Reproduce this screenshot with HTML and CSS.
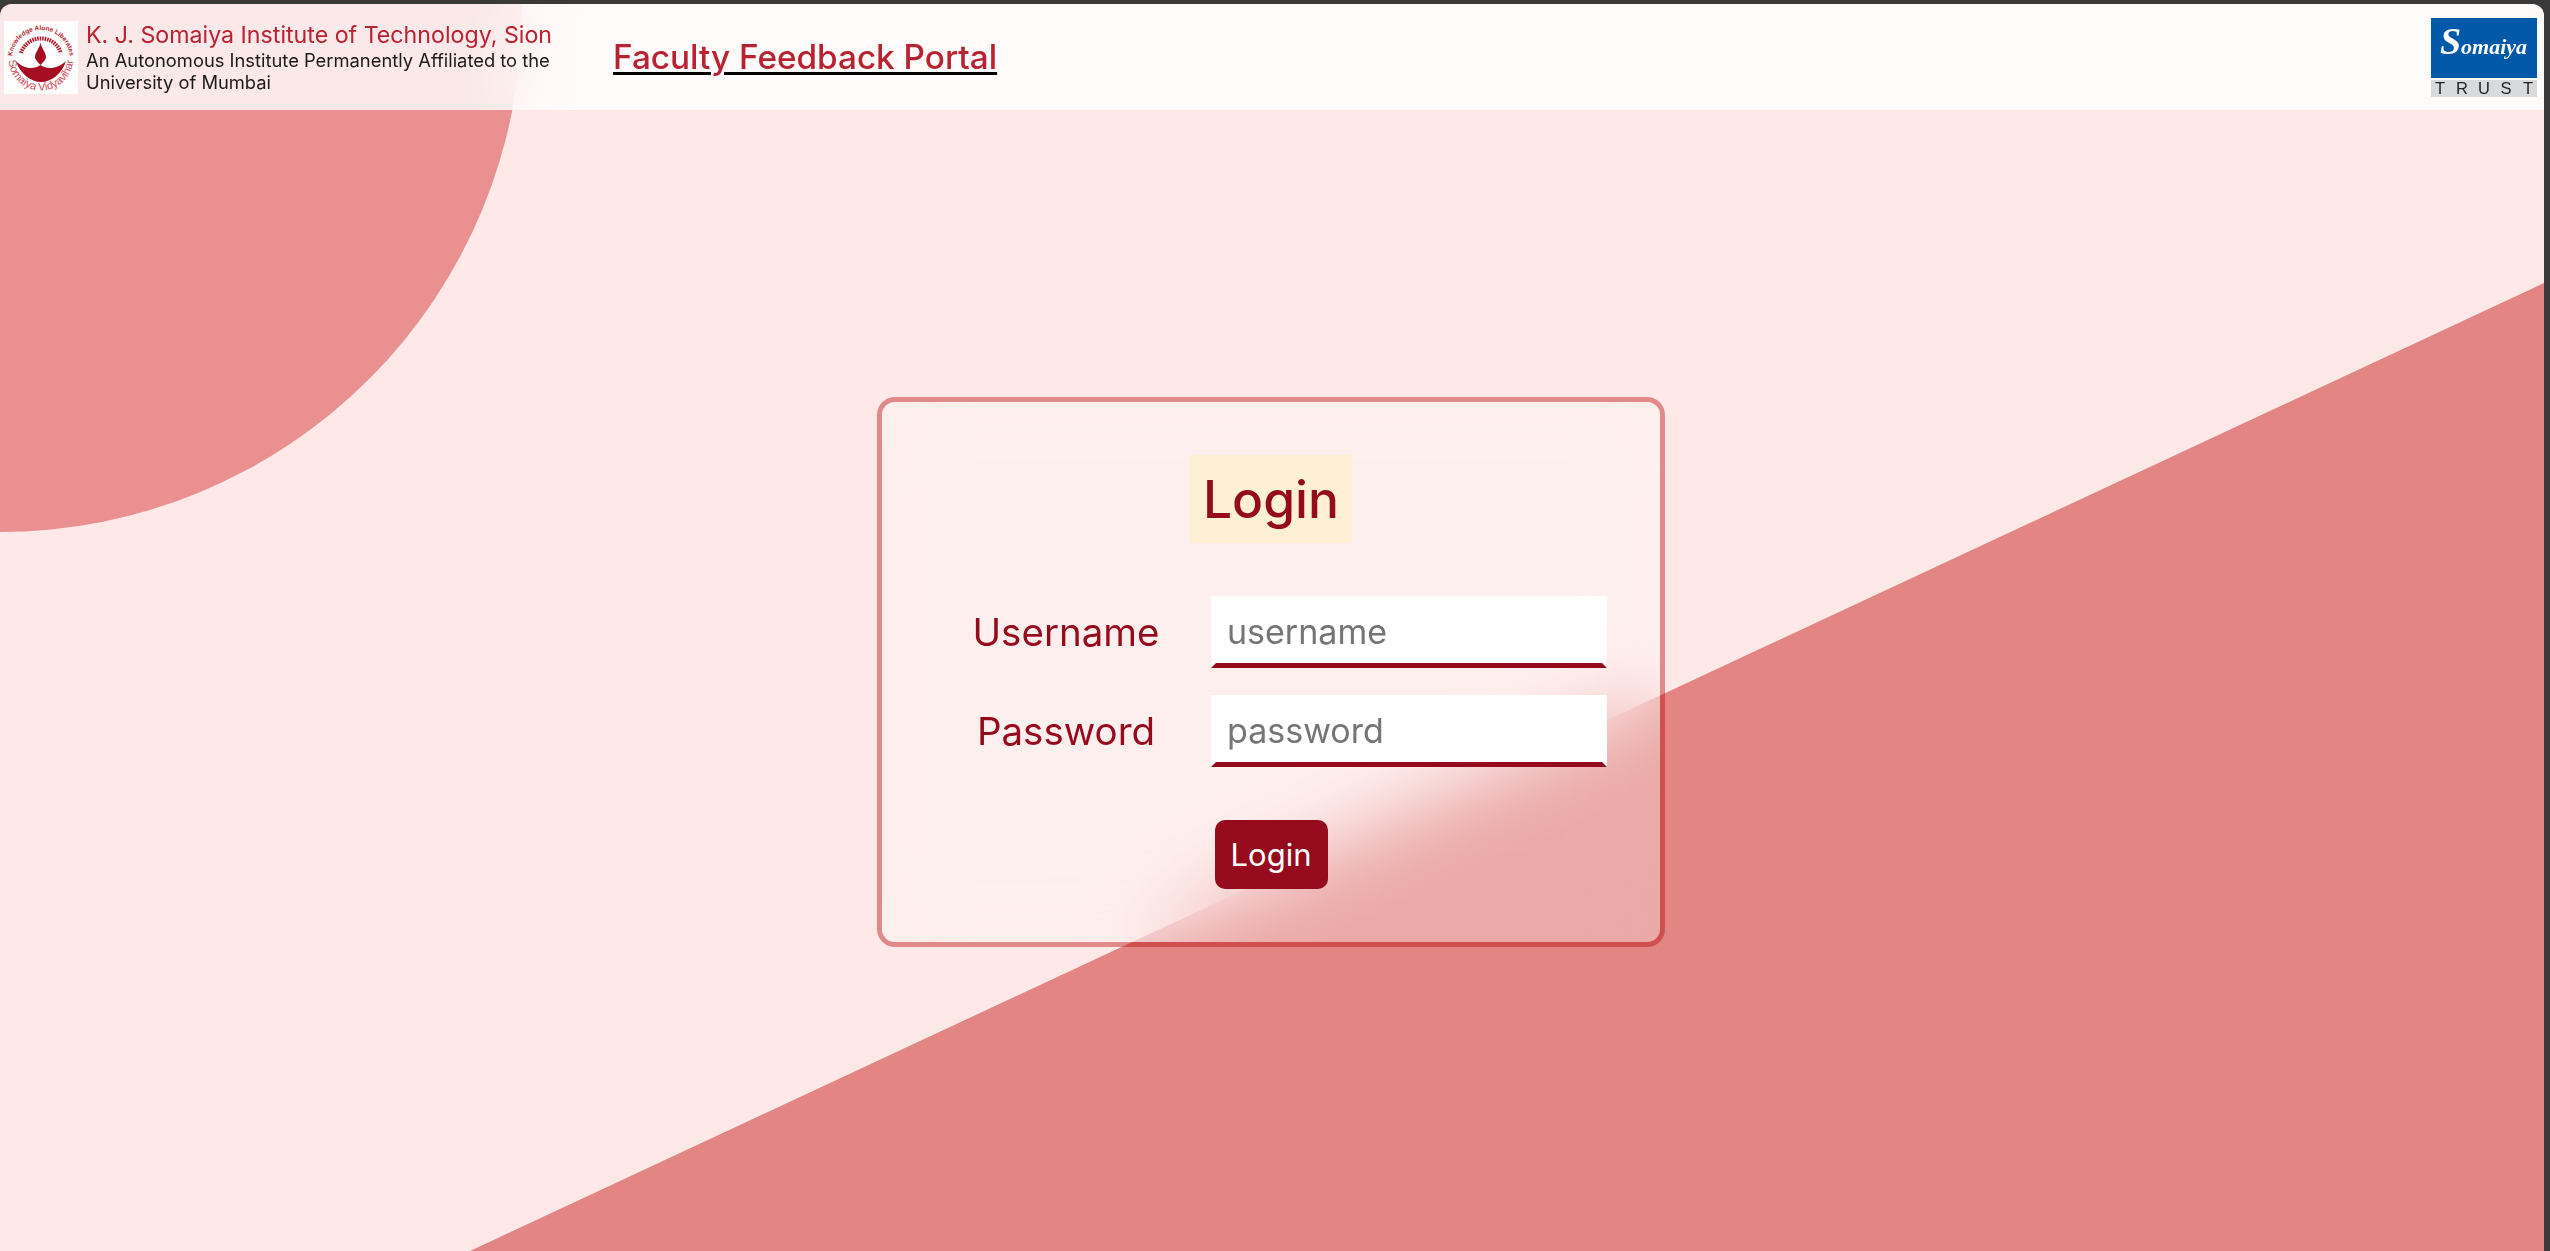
FILE: index.html
```html
<!DOCTYPE html>
<html lang="en">
<head>
<meta charset="utf-8">
<title>Faculty Feedback Portal</title>
<link rel="stylesheet" href="styles.css">
</head>
<body>
<div class="app">
  <div class="decor-circle"></div>
  <div class="decor-wedge"></div>
  <header class="topbar">
    <div class="brand">
      <svg class="college-logo" viewBox="0 0 74 73" aria-label="Somaiya Vidyavihar emblem">
        <rect width="74" height="73" fill="#fff"/>
        <defs>
          <path id="arcTop" d="M8 38 A29 29 0 0 1 66 38"/>
          <path id="arcBottom" d="M4.500 37 A32.500 32.500 0 0 0 69.500 37"/>
        </defs>
        <text class="arc-top"><textPath href="#arcTop" startOffset="50%" text-anchor="middle">Knowledge Alone Liberates</textPath></text>
        <path class="arc-script" d="M17 32 A21 21 0 0 1 57 32"/>
        <text class="arc-bottom"><textPath href="#arcBottom" startOffset="50%" text-anchor="middle">Somaiya Vidyavihar</textPath></text>
        <path class="mark" d="M36.500 21 C36 27 31 31 31 36 C31 39 34 41 36.500 44 C39 41 42 39 42 36 C42 31 37 27 36.500 21Z"/>
        <path class="mark" d="M12 40 C19 48 30 49 36.500 44 C43 49 54 48 62 40 C58 53 47 61 37 61 C27 61 16 53 12 40Z"/>
      </svg>
      <div class="brand-text">
        <div class="brand-name">K. J. Somaiya Institute of Technology, Sion</div>
        <div class="brand-sub">An Autonomous Institute Permanently Affiliated to the<br>University of Mumbai</div>
      </div>
    </div>
    <a class="portal-title" href="#"><span>Faculty Feedback Portal</span></a>
    <svg class="trust-logo" viewBox="0 0 106 79" aria-label="Somaiya Trust">
      <rect width="106" height="60" fill="#0059a8"/>
      <rect y="62" width="106" height="17" fill="#d9dadb"/>
      <text class="trust-script" x="52.500" y="36"><tspan class="trust-initial">S</tspan>omaiya</text>
      <text class="trust-word" x="9" y="76">T</text>
      <text class="trust-word" x="31" y="76">R</text>
      <text class="trust-word" x="53" y="76">U</text>
      <text class="trust-word" x="75" y="76">S</text>
      <text class="trust-word" x="97" y="76">T</text>
    </svg>
  </header>
  <main class="stage">
    <section class="card">
      <form class="card-body">
        <h1 class="card-title">Login</h1>
        <div class="fields">
          <label class="field-label" for="u">Username</label>
          <input class="field-input" id="u" type="text" placeholder="username">
          <label class="field-label" for="p">Password</label>
          <input class="field-input" id="p" type="password" placeholder="password">
        </div>
        <button class="submit" type="button">Login</button>
      </form>
    </section>
  </main>
</div>
</body>
</html>
```
FILE: styles.css
```css
* { box-sizing: border-box; }
html, body { height: 100%; }
body {
  margin: 0;
  padding: 4px 6px 0 0;
  background: #3a3a3a;
  font-family: "Inter", "Liberation Sans", sans-serif;
  overflow: hidden;
}
.app {
  position: relative;
  height: 100%;
  display: flex;
  flex-direction: column;
  background: #fee9e8;
  border-radius: 12px 12px 0 0;
  overflow: hidden;
}
.decor-circle {
  position: absolute;
  left: -522px;
  top: -516px;
  width: 1044px;
  height: 1044px;
  border-radius: 50%;
  background: #ea9090;
}
.decor-wedge {
  position: absolute;
  inset: 0;
  background: #e28583;
  clip-path: polygon(470px 1247px, 2544px 279px, 2544px 1247px);
}
.topbar {
  position: relative;
  flex: none;
  height: 106px;
  display: flex;
  align-items: center;
  padding: 0 7px 0 4px;
  background: rgba(255, 255, 255, 0.8);
  backdrop-filter: blur(30px);
}
.brand { display: flex; align-items: center; gap: 8px; width: 609px; }
.college-logo { width: 74px; height: 73px; flex: none; }
.arc-top { font: 700 6.5px "Liberation Sans", sans-serif; fill: #b3192c; }
.arc-script { fill: none; stroke: #b3192c; stroke-width: 4; stroke-dasharray: 1.6 .9; }
.arc-bottom { font: 400 11px "Liberation Sans", sans-serif; fill: #cf4a5a; }
.mark { fill: #a50e22; }
.brand-text { display: flex; flex-direction: column; }
.brand-name { font-size: 23.2px; line-height: 28px; color: #b92231; white-space: nowrap; }
.brand-sub { font-size: 18.35px; line-height: 22px; color: #1a1a1a; white-space: nowrap; }
.portal-title {
  font-size: 33.3px;
  font-weight: 500;
  color: #000;
  text-decoration: underline;
  text-decoration-thickness: 3px;
  text-underline-offset: 3px;
  margin-bottom: 1px;
}
.portal-title span { color: #b92231; }
.trust-logo { width: 106px; height: 79px; margin-left: auto; }
.trust-script {
  font: italic 700 22px "Liberation Serif", serif;
  fill: #fff;
  text-anchor: middle;
}
.trust-initial { font-size: 38px; }
.trust-word { font: 400 16.5px "Liberation Sans", sans-serif; fill: #222; text-anchor: middle; }
.stage {
  position: relative;
  flex: 1;
  display: flex;
  align-items: center;
  justify-content: center;
  padding-bottom: 18px;
}
.card {
  width: 788px;
  height: 550px;
  border: 5px solid rgba(183, 7, 7, 0.42);
  border-radius: 18px;
  margin-right: 2px;
}
.card-body {
  height: 100%;
  display: flex;
  flex-direction: column;
  align-items: center;
  gap: 53px;
  padding-top: 53px;
  background: rgba(255, 255, 255, 0.3);
  backdrop-filter: blur(40px);
  border-radius: 13px;
}
.card-title {
  margin: 0;
  height: 88px;
  width: 162px;
  display: flex;
  align-items: center;
  justify-content: center;
  background: #fdf0d5;
  color: #950a1c;
  font-size: 51.5px;
  font-weight: 500;
}
.fields {
  width: 100%;
  padding: 0 53px;
  display: grid;
  grid-template-columns: 262px 396px;
  column-gap: 14px;
  row-gap: 27px;
  align-items: center;
}
.field-label { text-align: center; font-size: 38.5px; color: #950a1c; }
.field-input {
  height: 72px;
  width: 100%;
  padding: 0 11px;
  background: #fff;
  border: 5px solid transparent;
  border-bottom-color: #950a1c;
  font: inherit;
  font-size: 34px;
  outline: none;
  border-radius: 0;
}
.field-input::placeholder { color: #757575; }
.submit {
  width: 113px;
  height: 69px;
  padding: 0;
  border: 0;
  border-radius: 10px;
  background: #950a1c;
  color: #fff;
  font: inherit;
  font-size: 31px;
}
```
